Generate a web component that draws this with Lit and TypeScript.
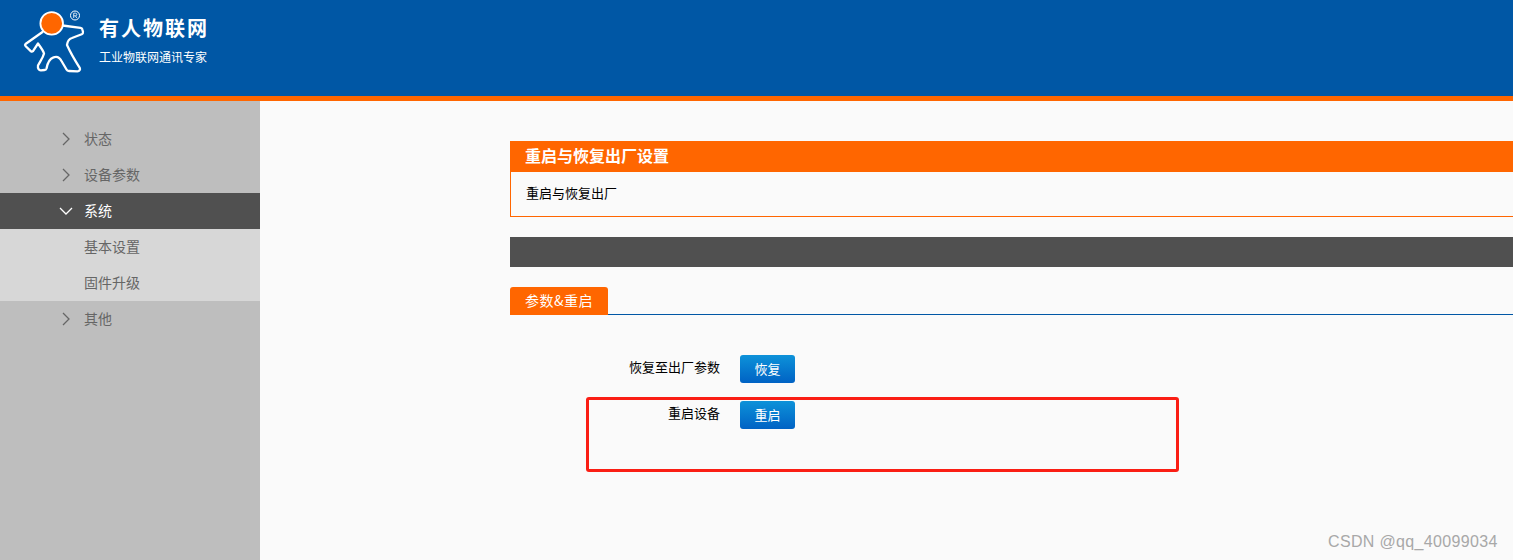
import { LitElement, html, css } from "lit";
import { customElement } from "lit/decorators.js";

const right = html`<svg class="chev" viewBox="0 0 16 16"><path d="M5 2l6 6-6 6" /></svg>`;
const down = html`<svg class="chev" viewBox="0 0 16 16"><path d="M2 5l6 6 6-6" /></svg>`;

@customElement("app-root")
export class AppRoot extends LitElement {
  static styles = css`
    :host {
      display: block;
      position: relative;
      width: 1513px;
      height: 560px;
      overflow: hidden;
      background: #fafafa;
      font-family: "Noto Sans CJK SC", "Liberation Sans", sans-serif;
      font-size: 13px;
    }
    .header {
      height: 96px;
      background: #0057a5;
      border-bottom: 5px solid #ff6600;
      display: flex;
      color: #fff;
    }
    .logo { width: 75px; height: 75px; margin: 5px 0 0 15px; flex: none; }
    .brand { margin-left: 9px; display: flex; flex-direction: column; }
    .brand-title { font-size: 20px; font-weight: 700; letter-spacing: 2px; line-height: 28px; margin-top: 14px; }
    .brand-sub { font-size: 12px; line-height: 16px; margin-top: 7px; }
    .main { display: flex; height: 459px; }
    .side { width: 260px; flex: none; background: #bebebe; padding-top: 20px; box-sizing: border-box; color: #666; font-size: 14px; }
    .item { height: 36px; display: flex; align-items: center; padding-left: 58px; }
    .item span { margin-top: -2px; }
    .item.active { background: #505050; color: #fff; }
    .item.sub { background: #d7d7d7; padding-left: 84px; }
    .chev { width: 16px; height: 16px; margin-right: 10px; fill: none; stroke: #666; stroke-width: 1.3; }
    .active .chev { stroke: #fff; }
    .content { flex: 1; min-width: 0; padding: 40px 0 0 250px; }
    .panel-title { height: 31px; background: #ff6600; color: #fff; font-size: 16px; font-weight: 700; line-height: 29px; padding-left: 15px; }
    .panel-body { height: 44px; border: 1px solid #ff6600; border-top: 0; border-right: 0; line-height: 42px; padding-left: 15px; color: #000; }
    .bar { height: 30px; background: #505050; margin-top: 20px; }
    .tabs { height: 28px; margin-top: 20px; border-bottom: 1px solid #0057a5; box-sizing: border-box; }
    .tab { width: 98px; height: 28px; box-sizing: border-box; background: #ff6600; color: #fff; border-radius: 3px 3px 0 0; text-align: center; line-height: 27px; font-size: 14px; letter-spacing: 0.5px; }
    .form { padding-top: 40px; display: flex; flex-direction: column; gap: 18px; }
    .row { display: flex; gap: 20px; }
    .label { width: 210px; text-align: right; line-height: 24px; color: #000; }
    button {
      width: 55px; height: 28px; padding: 0 0 2px; border: 0; border-radius: 3px;
      background: linear-gradient(#0d92d9, #0062c4);
      color: #fff; font: inherit;
    }
    .mark { position: absolute; left: 586px; top: 397px; width: 593px; height: 75px; box-sizing: border-box; border: 3px solid #fa1e14; border-radius: 3px; }
    .wm { position: absolute; left: 1328px; top: 532px; color: #a8a8a8; font-family: "Liberation Sans", sans-serif; font-size: 16px; line-height: 20px; letter-spacing: 0.35px; }
  `;

  render() {
    return html`
      <div class="header">
        <svg class="logo" viewBox="0 0 75 75">
          <path fill="none" stroke="#fff" stroke-width="2.300" stroke-linejoin="round" stroke-linecap="round"
            d="M27.500 27L10.500 39Q9.500 40 10.500 41L16 46.300Q17 47 18 46.200L23 38.500C25 41.500 28 45 29 48.500 28 53 25 56.500 23 60.500 22.500 63.500 24 65.500 26 65.300L29.500 65C30.500 65 31.200 64.500 31.500 63.500 32.500 58 35 53.500 38.500 52.300 42 51 45 53 46.500 56L51.500 64.500C52 65.500 53 66 54 66L62.500 66.300C64.500 66.300 65.500 64.500 64.800 63 61 57 56.500 50 52 40 52.500 36 54 34 57 33L66.700 29.300Q68.200 28.500 68 27L67.300 24.300Q67 23 65.500 22.800L47.500 20.500" />
          <circle cx="36.700" cy="18.400" r="11.300" fill="#ff6600" stroke="#fff" stroke-width="1.800" />
          <circle cx="60" cy="10.500" r="4.500" fill="none" stroke="#fff" stroke-width="1" />
          <path d="M58.700 13V8.200h1.800a1.300 1.300 0 0 1 0 2.600h-1.800M60.500 10.800l1.200 2.200" fill="none" stroke="#fff" stroke-width="0.800" />
        </svg>
        <div class="brand">
          <div class="brand-title">有人物联网</div>
          <div class="brand-sub">工业物联网通讯专家</div>
        </div>
      </div>
      <div class="main">
        <nav class="side">
          <div class="item">${right}<span>状态</span></div>
          <div class="item">${right}<span>设备参数</span></div>
          <div class="item active">${down}<span>系统</span></div>
          <div class="item sub"><span>基本设置</span></div>
          <div class="item sub"><span>固件升级</span></div>
          <div class="item">${right}<span>其他</span></div>
        </nav>
        <section class="content">
          <div class="panel-title">重启与恢复出厂设置</div>
          <div class="panel-body">重启与恢复出厂</div>
          <div class="bar"></div>
          <div class="tabs"><div class="tab">参数&amp;重启</div></div>
          <div class="form">
            <div class="row"><div class="label">恢复至出厂参数</div><button>恢复</button></div>
            <div class="row"><div class="label">重启设备</div><button>重启</button></div>
          </div>
        </section>
      </div>
      <div class="mark"></div>
      <div class="wm">CSDN @qq_40099034</div>
    `;
  }
}
